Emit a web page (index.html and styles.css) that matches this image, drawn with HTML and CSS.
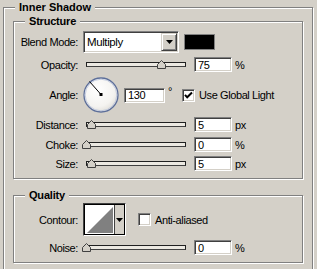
FILE: index.html
```
<!DOCTYPE html>
<html>

<head>
    <meta charset="UTF-8">
    <title>Inner Shadow</title>
    <link rel="stylesheet" href="styles.css">
</head>

<body>
    <div class="group outer">
        <div class="group-title outer-title">Inner Shadow</div>

        <div class="group section structure">
            <div class="group-title">Structure</div>

            <div class="row row-blend">
                <span class="label">Blend Mode:</span>
                <div class="select">
                    <span class="select-value">Multiply</span>
                    <span class="drop-btn">
                        <svg width="7" height="4" viewBox="0 0 7 4"><polygon points="0,0 7,0 3.5,4" fill="#000"/></svg>
                    </span>
                </div>
                <div class="swatch"></div>
            </div>

            <div class="row row-opacity">
                <span class="label">Opacity:</span>
                <div class="slider">
                    <div class="track"></div>
                    <svg class="thumb" style="left: 74px" width="9" height="9" viewBox="0 0 9 9"><polygon points="4.5,0.5 8.5,4.5 8.5,8.5 0.5,8.5 0.5,4.5" fill="#d4d0c8" stroke="#404040"/></svg>
                </div>
                <input class="field" type="text" value="75">
                <span class="unit">%</span>
            </div>

            <div class="row row-angle">
                <span class="label">Angle:</span>
                <svg class="dial" width="36" height="36" viewBox="0 0 36 36">
                    <defs>
                        <radialGradient id="dialFill" cx="40%" cy="35%" r="70%">
                            <stop offset="0" stop-color="#ffffff"/>
                            <stop offset="0.7" stop-color="#f4f3f0"/>
                            <stop offset="1" stop-color="#dedcd6"/>
                        </radialGradient>
                    </defs>
                    <circle cx="18" cy="18" r="17" fill="url(#dialFill)" stroke="#5d6f9a" stroke-width="1.3"/>
                    <circle cx="18" cy="18" r="15.8" fill="none" stroke="#b9c3da" stroke-width="0.8"/>
                    <line x1="18" y1="17.5" x2="6.5" y2="4.5" stroke="#000" stroke-width="1"/>
                    <rect x="16.5" y="16" width="3" height="3" fill="#000"/>
                </svg>
                <input class="field field-angle" type="text" value="130">
                <span class="degree">°</span>
                <span class="check checked">
                    <svg width="9" height="9" viewBox="0 0 9 9"><path d="M1 3.8 L3.2 6.3 L8 1.5" fill="none" stroke="#000" stroke-width="2"/></svg>
                </span>
                <span class="check-label">Use Global Light</span>
            </div>

            <div class="row row-distance">
                <span class="label">Distance:</span>
                <div class="slider">
                    <div class="track"></div>
                    <svg class="thumb" style="left: 4px" width="9" height="9" viewBox="0 0 9 9"><polygon points="4.5,0.5 8.5,4.5 8.5,8.5 0.5,8.5 0.5,4.5" fill="#d4d0c8" stroke="#404040"/></svg>
                </div>
                <input class="field" type="text" value="5">
                <span class="unit">px</span>
            </div>

            <div class="row row-choke">
                <span class="label">Choke:</span>
                <div class="slider">
                    <div class="track"></div>
                    <svg class="thumb" style="left: -1px" width="9" height="9" viewBox="0 0 9 9"><polygon points="4.5,0.5 8.5,4.5 8.5,8.5 0.5,8.5 0.5,4.5" fill="#d4d0c8" stroke="#404040"/></svg>
                </div>
                <input class="field" type="text" value="0">
                <span class="unit">%</span>
            </div>

            <div class="row row-size">
                <span class="label">Size:</span>
                <div class="slider">
                    <div class="track"></div>
                    <svg class="thumb" style="left: 4px" width="9" height="9" viewBox="0 0 9 9"><polygon points="4.5,0.5 8.5,4.5 8.5,8.5 0.5,8.5 0.5,4.5" fill="#d4d0c8" stroke="#404040"/></svg>
                </div>
                <input class="field" type="text" value="5">
                <span class="unit">px</span>
            </div>
        </div>

        <div class="group section quality">
            <div class="group-title">Quality</div>

            <div class="row row-contour">
                <span class="label">Contour:</span>
                <div class="contour">
                    <svg class="contour-preview" width="29" height="29" viewBox="0 0 29 29">
                        <rect width="29" height="29" fill="#fff"/>
                        <polygon points="2,28 28,2 28,28" fill="#808080"/>
                    </svg>
                    <span class="contour-btn">
                        <svg width="7" height="4" viewBox="0 0 7 4"><polygon points="0,0 7,0 3.5,4" fill="#000"/></svg>
                    </span>
                </div>
                <span class="check check-aa"></span>
                <span class="check-label">Anti-aliased</span>
            </div>

            <div class="row row-noise">
                <span class="label">Noise:</span>
                <div class="slider">
                    <div class="track"></div>
                    <svg class="thumb" style="left: -1px" width="9" height="9" viewBox="0 0 9 9"><polygon points="4.5,0.5 8.5,4.5 8.5,8.5 0.5,8.5 0.5,4.5" fill="#d4d0c8" stroke="#404040"/></svg>
                </div>
                <input class="field" type="text" value="0">
                <span class="unit">%</span>
            </div>
        </div>
    </div>
</body>

</html>
```

FILE: styles.css
```
* {
    box-sizing: border-box;
}

html,
body {
    margin: 0;
    padding: 0;
    height: 100%;
    overflow: hidden;
}

body {
    background: #d4d0c8;
    color: #000;
    font-family: 'Liberation Sans', Arial, sans-serif;
    font-size: 11px;
    letter-spacing: -0.4px;
}

/* Etched group boxes */
.group {
    border: 1px solid #808080;
    box-shadow: inset 1px 1px 0 #fff, 1px 1px 0 #fff;
}

.outer {
    width: 310px;
    margin: 7px 0 0 3px;
    padding: 0 9px 14px;
}

.group-title {
    width: fit-content;
    height: 13px;
    margin: -7px 0 0 11px;
    padding: 0 4px;
    line-height: 13px;
    background: #d4d0c8;
    font-weight: bold;
    letter-spacing: -0.2px;
}

.outer-title {
    margin-left: 2px;
    letter-spacing: 0;
}

.structure {
    margin-top: 7px;
    padding-bottom: 6px;
}

.quality {
    margin-top: 16px;
    padding-bottom: 6px;
}

/* Rows */
.row {
    display: flex;
    align-items: center;
    height: 17px;
    margin-top: 3px;
}

.row-blend {
    height: 22px;
}

.row-angle {
    height: 36px;
    margin-top: 4px;
}

.row-size {
    margin-top: 2px;
}

.row-contour {
    height: 33px;
    margin-top: 1px;
}

.label {
    flex: none;
    width: 64px;
    margin-right: 5px;
    text-align: right;
}

/* Sunken controls */
.select,
.field,
.check {
    background: #fff;
    border: 1px solid;
    border-color: #808080 #fff #fff #808080;
    box-shadow: inset 1px 1px 0 #404040, inset -1px -1px 0 #d4d0c8;
}

.select {
    display: flex;
    flex: none;
    width: 96px;
    height: 22px;
}

.select-value {
    flex: 1;
    padding-left: 3px;
    line-height: 20px;
    font-size: 11.5px;
}

.drop-btn {
    display: flex;
    align-items: center;
    justify-content: center;
    width: 16px;
    margin: 1px 1px 1px 0;
    background: #d4d0c8;
    border: 1px solid;
    border-color: #d4d0c8 #404040 #404040 #d4d0c8;
    box-shadow: inset 1px 1px 0 #fff, inset -1px -1px 0 #808080;
}

.swatch {
    flex: none;
    width: 31px;
    height: 16px;
    margin-left: 5px;
    background: #000;
    border: 1px solid #808080;
}

/* Sliders */
.slider {
    position: relative;
    flex: none;
    width: 106px;
    height: 17px;
}

.track {
    height: 5px;
    margin: 6px 3px 0;
    background: #ece9e2;
    border: 1px solid #202020;
    border-bottom-color: #404040;
}

.thumb {
    position: absolute;
    top: 4px;
}

.field {
    flex: none;
    width: 38px;
    height: 15px;
    margin: 0 0 0 5px;
    padding: 0 0 0 3px;
    font: inherit;
    letter-spacing: inherit;
    color: #000;
    outline: none;
}

.unit {
    margin-left: 3px;
}

/* Angle */
.dial {
    flex: none;
}

.field-angle {
    width: 41px;
    margin-left: 5px;
}

.degree {
    margin-left: 3px;
    align-self: flex-start;
    margin-top: 8px;
}

.check {
    display: flex;
    align-items: center;
    justify-content: center;
    flex: none;
    width: 13px;
    height: 13px;
    margin-left: 10px;
}

.check-label {
    margin-left: 4px;
}

/* Contour */
.contour {
    display: flex;
    flex: none;
    width: 43px;
    height: 33px;
    background: #fff;
    border: 1px solid;
    border-color: #404040 #fff #fff #404040;
    box-shadow: inset 1px 1px 0 #000, inset -1px -1px 0 #000;
}

.contour-preview {
    flex: none;
    margin: 1px 0 1px 1px;
}

.contour-btn {
    display: flex;
    align-items: center;
    justify-content: center;
    width: 11px;
    margin: 1px 1px 1px 0;
    background: #d4d0c8;
    border-left: 1px solid #404040;
}

.check-aa {
    margin-left: 12px;
}
```
